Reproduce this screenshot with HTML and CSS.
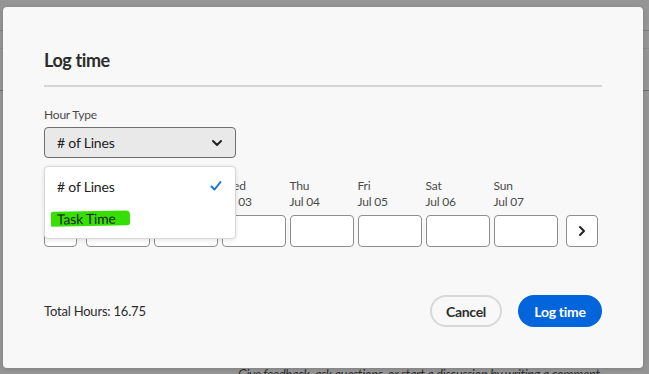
FILE: index.html
```html
<!DOCTYPE html>
<html lang="en">
<head>
    <meta charset="UTF-8">
    <meta name="viewport" content="width=device-width, initial-scale=1.0">
    <title>Log time</title>
    <link rel="stylesheet" href="styles.css">
</head>
<body>

<!-- page underneath the modal, dimmed -->
<div class="page">
    <div class="page-row row-a"></div>
    <div class="page-row row-b"></div>
    <div class="page-row row-c"></div>
    <p class="comment-hint">Give feedback, ask questions, or start a discussion by writing a comment</p>
</div>

<div class="dialog">
    <h2 class="dialog-title">Log time</h2>
    <div class="divider"></div>

    <div class="field">
        <label class="field-label">Hour Type</label>
        <div class="picker">
            <span>&#35; of Lines</span>
            <svg class="chevron" width="12" height="12" viewBox="0 0 12 12"><path d="M2 4l4 4 4-4" fill="none" stroke="#222" stroke-width="2" stroke-linecap="round" stroke-linejoin="round"/></svg>
        </div>
        <ul class="menu">
            <li class="menu-item selected">
                <span>&#35; of Lines</span>
                <svg width="12" height="12" viewBox="0 0 12 12"><path d="M1.5 6.5l3 3 6-7.5" fill="none" stroke="#1473e6" stroke-width="2" stroke-linecap="round" stroke-linejoin="round"/></svg>
            </li>
            <li class="menu-item"><span class="marker">Task Time</span></li>
        </ul>
    </div>

    <div class="week">
        <button class="step">
            <svg width="12" height="12" viewBox="0 0 12 12"><path d="M8 2L4 6l4 4" fill="none" stroke="#222" stroke-width="2" stroke-linecap="round" stroke-linejoin="round"/></svg>
        </button>
        <div class="day"><span>Mon</span><span>Jul 01</span><input type="text"></div>
        <div class="day"><span>Tue</span><span>Jul 02</span><input type="text"></div>
        <div class="day"><span>Wed</span><span>Jul 03</span><input type="text"></div>
        <div class="day"><span>Thu</span><span>Jul 04</span><input type="text"></div>
        <div class="day"><span>Fri</span><span>Jul 05</span><input type="text"></div>
        <div class="day"><span>Sat</span><span>Jul 06</span><input type="text"></div>
        <div class="day"><span>Sun</span><span>Jul 07</span><input type="text"></div>
        <button class="step">
            <svg width="12" height="12" viewBox="0 0 12 12"><path d="M4 2l4 4-4 4" fill="none" stroke="#222" stroke-width="2" stroke-linecap="round" stroke-linejoin="round"/></svg>
        </button>
    </div>

    <div class="dialog-footer">
        <span class="total">Total Hours: 16.75</span>
        <button class="btn btn-secondary">Cancel</button>
        <button class="btn btn-primary">Log time</button>
    </div>
</div>

</body>
</html>
```

FILE: styles.css
```css
body {
    margin: 0;
    width: 649px;
    height: 374px;
    overflow: hidden;
    background: #959595;
    font-family: Lato, 'Liberation Sans', sans-serif;
    color: #222;
    position: relative;
}
.page {
    height: 374px;
    display: flex;
    flex-direction: column;
}
.page-row {
    border-bottom: 1px solid #7c7c7c;
}
.row-a {
    height: 30px;
}
.row-b {
    height: 17px;
    border-color: #898989;
}
.row-c {
    height: 41px;
    border-color: #6e6e6e;
}
.comment-hint {
    margin: auto 0 -8px 238px;
    font-size: 13px;
    line-height: 16px;
    font-style: italic;
    letter-spacing: -0.35px;
    white-space: nowrap;
    color: #2e2e2e;
}
.dialog {
    position: absolute;
    left: 3px;
    top: 7px;
    width: 640px;
    height: 361px;
    box-sizing: border-box;
    padding: 41px 41px 0;
    background: #f8f8f8;
    border-radius: 4px;
    box-shadow: 0 1px 4px rgba(0, 0, 0, 0.15);
}
.dialog-title {
    margin: 0;
    font-size: 18px;
    line-height: 24px;
    font-weight: 700;
    letter-spacing: -0.4px;
    color: #2c2c2c;
}
.divider {
    height: 2px;
    background: #d5d5d5;
    margin-top: 13px;
}
.field {
    position: relative;
    width: 192px;
    margin-top: 20px;
}
.field-label {
    display: block;
    font-size: 12px;
    line-height: 16px;
    letter-spacing: -0.2px;
    color: #4b4b4b;
    margin-bottom: 4px;
}
.picker {
    height: 31px;
    box-sizing: border-box;
    border: 1px solid #6e6e6e;
    border-radius: 4px;
    background: #e9e9e9;
    display: flex;
    align-items: center;
    justify-content: space-between;
    padding: 0 12px;
    font-size: 14px;
    letter-spacing: -0.2px;
}
.menu {
    position: absolute;
    left: 0;
    right: 0;
    top: 59px;
    margin: 0;
    padding: 3px 0 4px;
    list-style: none;
    background: #fff;
    border: 1px solid #d8d8d8;
    border-radius: 4px;
    box-shadow: 0 1px 4px rgba(0, 0, 0, 0.12);
    z-index: 2;
}
.menu-item {
    height: 32px;
    display: flex;
    align-items: center;
    justify-content: space-between;
    padding: 0 13px 0 12px;
    font-size: 14px;
    letter-spacing: -0.2px;
}
.marker {
    background: #35e000;
    line-height: 15px;
    padding: 0 14px 0 6px;
    margin-left: -6px;
    border-radius: 2px 4px 3px 1px;
    transform: rotate(-1deg);
}
.week {
    display: flex;
    align-items: flex-end;
    gap: 4px;
    margin-top: 20px;
}
.day {
    width: 64px;
    display: flex;
    flex-direction: column;
    font-size: 12px;
    line-height: 16px;
    letter-spacing: -0.2px;
    color: #4b4b4b;
}
.day input {
    margin-top: 5px;
    height: 32px;
    box-sizing: border-box;
    border: 1px solid #8e8e8e;
    border-radius: 4px;
    background: #fff;
}
.step {
    width: 34px;
    height: 32px;
    margin: 0 4px;
    padding: 0;
    border: 1px solid #8e8e8e;
    border-radius: 4px;
    background: #fff;
    display: flex;
    align-items: center;
    justify-content: center;
}
.step:first-child {
    margin: 0 5px 0 0;
}
.dialog-footer {
    display: flex;
    align-items: center;
    gap: 16px;
    margin-top: 48px;
}
.total {
    flex: 1;
    font-size: 13px;
    letter-spacing: -0.2px;
    color: #2c2c2c;
}
.btn {
    height: 32px;
    border-radius: 16px;
    font-family: inherit;
    font-size: 14px;
    font-weight: 700;
    letter-spacing: -0.3px;
    padding: 0;
}
.btn-secondary {
    width: 72px;
    background: #f8f8f8;
    border: 2px solid #d8d8d8;
    color: #2c2c2c;
}
.btn-primary {
    width: 84px;
    background: #0265dc;
    border: none;
    color: #fff;
}
```
